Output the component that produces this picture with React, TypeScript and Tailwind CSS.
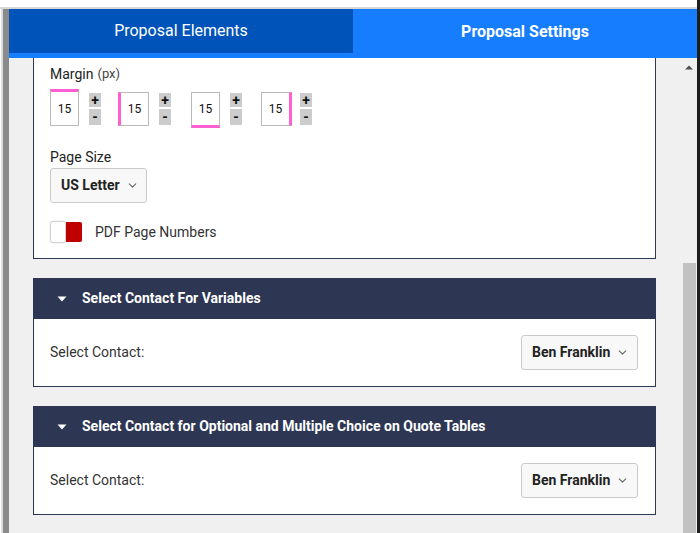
import { ChevronDown } from "lucide-react";

const font = "font-['Roboto','Liberation_Sans',sans-serif]";

const Select = ({ label, className }: { label: string; className?: string }) => (
  <div
    className={`flex items-center justify-between h-[35px] bg-[#f8f8f8] border border-[#cacaca] rounded-[3px] pl-[10px] pr-[10px] whitespace-nowrap ${className ?? ""}`}
  >
    <span className="text-[14px] font-bold text-[#222]">{label}</span>
    <ChevronDown size={13} strokeWidth={2} className="text-[#666] ml-[6px] shrink-0" />
  </div>
);

const Stepper = () => (
  <div className="flex flex-col gap-[2px] mt-[4px]">
    <div className="w-[12px] h-[14px] bg-[#cccccc] flex items-center justify-center text-[14px] leading-none font-bold text-[#111]">+</div>
    <div className="w-[12px] h-[16px] bg-[#cccccc] flex items-center justify-center text-[14px] leading-none font-bold text-[#111]">-</div>
  </div>
);

const box = "flex items-center justify-center bg-white border border-[#b9b9b9] text-[12px] text-[#111]";

const ContactCard = ({ title }: { title: string }) => (
  <div className="mt-[19px]">
    <div className="h-[41px] bg-[#2d3653] flex items-center pl-[24px]">
      <svg width="10" height="6" viewBox="0 0 10 6" className="mr-[15px]">
        <polygon points="0.5,0.5 9.5,0.5 5,5.5" fill="#fff" />
      </svg>
      <span className="text-white text-[14px] font-bold">{title}</span>
    </div>
    <div className="h-[68px] bg-white border-x border-b border-[#2d3653] flex items-center justify-between pl-[16px] pr-[17px]">
      <span className="text-[14px] text-[#333]">Select Contact:</span>
      <Select label="Ben Franklin" className="w-[117px]" />
    </div>
  </div>
);

export default function App() {
  return (
    <div className={`w-[700px] h-[533px] overflow-hidden flex bg-white ${font}`}>
      <div className="w-[697px] h-full flex flex-col">
        <div className="h-[9px] shrink-0 bg-white border-b-2 border-[#d6d6d6]" />
        <div className="flex-1 flex min-h-0">
          <div className="w-[9px] flex shrink-0">
            <div className="w-[1px] bg-white" />
            <div className="w-[2px] bg-[#dddddd]" />
            <div className="w-[6px] bg-[#8a8a8a]" />
          </div>
          <div className="flex-1 flex flex-col min-h-0">
            <div className="h-[49px] shrink-0 bg-[#177dff] flex items-start">
              <div className="w-[344px] h-[44px] bg-[#0053b9] flex items-center justify-center text-white text-[16px]">
                Proposal Elements
              </div>
              <div className="flex-1 h-[44px] flex items-center justify-center text-white text-[16px] font-bold pt-[1px]">
                Proposal Settings
              </div>
            </div>
            <div className="flex-1 flex min-h-0 bg-[#f0f0f0]">
              <div className="flex-1 px-[24px] overflow-hidden">
                <div className="bg-white border-x border-b border-[#2d3653] pl-[16px] pt-[6px] pb-[15px]">
                  <div className="h-[20px] flex items-center text-[14px] text-[#222]">
                    Margin<span className="text-[13px] ml-[4px] text-[#444]">(px)</span>
                  </div>
                  <div className="flex items-start mt-[5px]">
                    <div className={`${box} w-[29px] h-[37px] border-t-[3px] border-t-[#ff5fd0]`}>15</div>
                    <div className="ml-[10px]"><Stepper /></div>
                    <div className={`${box} ml-[17px] mt-[3px] w-[31px] h-[34px] border-l-[3px] border-l-[#ff5fd0]`}>15</div>
                    <div className="ml-[10px]"><Stepper /></div>
                    <div className={`${box} ml-[20px] mt-[3px] w-[29px] h-[36px] border-b-[3px] border-b-[#ff5fd0]`}>15</div>
                    <div className="ml-[10px]"><Stepper /></div>
                    <div className={`${box} ml-[19px] mt-[3px] w-[31px] h-[34px] border-r-[3px] border-r-[#ff5fd0]`}>15</div>
                    <div className="ml-[8px]"><Stepper /></div>
                  </div>
                  <div className="mt-[19px] h-[20px] flex items-center text-[14px] text-[#222]">Page Size</div>
                  <Select label="US Letter" className="mt-px w-[97px]" />
                  <div className="mt-[18px] h-[22px] flex items-center">
                    <div className="flex items-center">
                      <div className="w-[16px] h-[22px] bg-white border border-[#d4d4d4] rounded-[3px] shadow-[0_0_2px_rgba(0,0,0,0.15)] z-10" />
                      <div className="w-[16px] h-[20px] bg-[#c00000] rounded-r-[2px]" />
                    </div>
                    <span className="ml-[13px] text-[14px] text-[#333]">PDF Page Numbers</span>
                  </div>
                </div>
                <ContactCard title="Select Contact For Variables" />
                <ContactCard title="Select Contact for Optional and Multiple Choice on Quote Tables" />
              </div>
              <div className="w-[17px] shrink-0 flex flex-col items-center bg-[#f0f0f0]">
                <svg width="8" height="5" viewBox="0 0 8 5" className="mt-[7px] ml-[1px]">
                  <polygon points="0,4.5 8,4.5 4,0.5" fill="#505050" />
                </svg>
                <div className="mt-[193px] w-[13px] flex-1 bg-[#c1c1c1] ml-[1px]" />
              </div>
            </div>
          </div>
        </div>
      </div>
      <div className="w-[3px] h-full bg-[#1e1e1e]" />
    </div>
  );
}
